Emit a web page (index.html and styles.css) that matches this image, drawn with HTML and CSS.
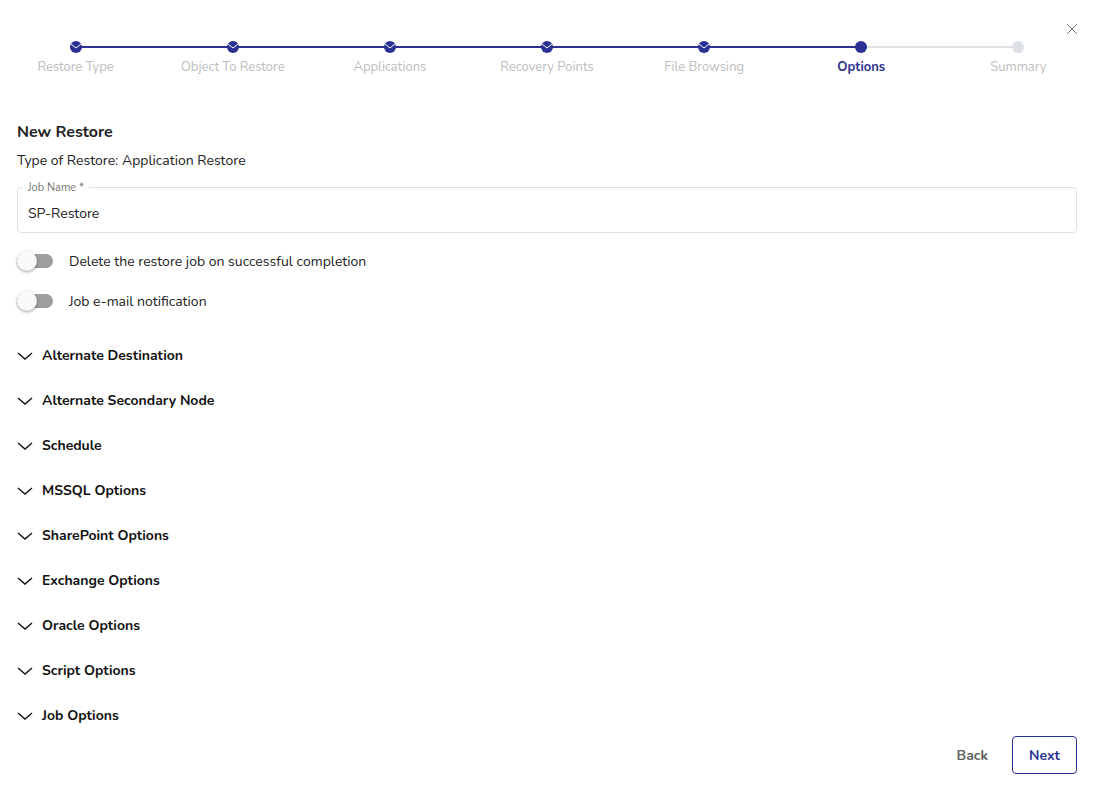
FILE: index.html
```html
<!DOCTYPE html>
<html lang="en">
<head>
    <meta charset="UTF-8">
    <meta name="viewport" content="width=device-width, initial-scale=1.0">
    <title>New Restore</title>
    <link rel="stylesheet" href="styles.css">
</head>
<body>
    <button class="close-btn" type="button" aria-label="Close">
        <svg width="12" height="12" viewBox="0 0 12 12"><path d="M1 1l10 10M11 1L1 11"/></svg>
    </button>

    <ol class="stepper">
        <li class="step done">
            <span class="dot"><svg viewBox="0 0 12 12"><path d="M1 3l5 4 5-4"/></svg></span>
            <span class="step-label">Restore Type</span>
        </li>
        <li class="step done">
            <span class="dot"><svg viewBox="0 0 12 12"><path d="M1 3l5 4 5-4"/></svg></span>
            <span class="step-label">Object To Restore</span>
        </li>
        <li class="step done">
            <span class="dot"><svg viewBox="0 0 12 12"><path d="M1 3l5 4 5-4"/></svg></span>
            <span class="step-label">Applications</span>
        </li>
        <li class="step done">
            <span class="dot"><svg viewBox="0 0 12 12"><path d="M1 3l5 4 5-4"/></svg></span>
            <span class="step-label">Recovery Points</span>
        </li>
        <li class="step done">
            <span class="dot"><svg viewBox="0 0 12 12"><path d="M1 3l5 4 5-4"/></svg></span>
            <span class="step-label">File Browsing</span>
        </li>
        <li class="step current" aria-current="step">
            <span class="dot"></span>
            <span class="step-label">Options</span>
        </li>
        <li class="step">
            <span class="dot"></span>
            <span class="step-label">Summary</span>
        </li>
    </ol>

    <form class="content">
        <h2>New Restore</h2>
        <p class="restore-type">Type of Restore: Application Restore</p>

        <fieldset class="field">
            <legend><label for="jobName">Job Name *</label></legend>
            <input type="text" id="jobName" value="SP-Restore">
        </fieldset>

        <label class="toggle">
            <input type="checkbox">
            <span>Delete the restore job on successful completion</span>
        </label>
        <label class="toggle">
            <input type="checkbox">
            <span>Job e-mail notification</span>
        </label>

        <div class="sections">
            <details>
                <summary><svg class="chevron" viewBox="0 0 16 10"><path d="M1 2l7 6 7-6"/></svg>Alternate Destination</summary>
            </details>
            <details>
                <summary><svg class="chevron" viewBox="0 0 16 10"><path d="M1 2l7 6 7-6"/></svg>Alternate Secondary Node</summary>
            </details>
            <details>
                <summary><svg class="chevron" viewBox="0 0 16 10"><path d="M1 2l7 6 7-6"/></svg>Schedule</summary>
            </details>
            <details>
                <summary><svg class="chevron" viewBox="0 0 16 10"><path d="M1 2l7 6 7-6"/></svg>MSSQL Options</summary>
            </details>
            <details>
                <summary><svg class="chevron" viewBox="0 0 16 10"><path d="M1 2l7 6 7-6"/></svg>SharePoint Options</summary>
            </details>
            <details>
                <summary><svg class="chevron" viewBox="0 0 16 10"><path d="M1 2l7 6 7-6"/></svg>Exchange Options</summary>
            </details>
            <details>
                <summary><svg class="chevron" viewBox="0 0 16 10"><path d="M1 2l7 6 7-6"/></svg>Oracle Options</summary>
            </details>
            <details>
                <summary><svg class="chevron" viewBox="0 0 16 10"><path d="M1 2l7 6 7-6"/></svg>Script Options</summary>
            </details>
            <details>
                <summary><svg class="chevron" viewBox="0 0 16 10"><path d="M1 2l7 6 7-6"/></svg>Job Options</summary>
            </details>
        </div>

        <div class="actions">
            <button class="back-btn" type="button">Back</button>
            <button class="next-btn" type="button">Next</button>
        </div>
    </form>
</body>
</html>
```
FILE: styles.css
```css
* {
    box-sizing: border-box;
}

body {
    position: relative;
    margin: 0;
    background-color: #fff;
    color: #212121;
    font-family: Nunito, Lato, sans-serif;
    font-size: 14px;
    line-height: 20px;
    overflow-x: hidden;
}

button, input {
    font: inherit;
    color: inherit;
}

svg {
    display: block;
    fill: none;
    stroke: currentColor;
}

.close-btn {
    position: absolute;
    top: 19px;
    right: 12px;
    padding: 4px;
    border: none;
    background: none;
    color: #757575;
    cursor: pointer;
}

/* Stepper */
.stepper {
    display: grid;
    grid-template-columns: repeat(7, 1fr);
    margin: 0 -3px;
    padding: 41px 0 0;
    list-style: none;
}

.step {
    position: relative;
    display: flex;
    flex-direction: column;
    align-items: center;
    gap: 4px;
    color: #bdbdbd;
}

.step::after {
    content: "";
    position: absolute;
    top: 5px;
    left: 50%;
    width: 100%;
    height: 2px;
    background-color: #dee2e6;
}

.step:last-child::after {
    display: none;
}

.step.done::after {
    background-color: #2a3192;
}

.dot {
    z-index: 1;
    width: 12px;
    height: 12px;
    border-radius: 50%;
    background-color: #dee2e6;
    color: #fff;
}

.done .dot, .current .dot {
    background-color: #2a3192;
}

.step-label {
    font-size: 13px;
}

.current .step-label {
    color: #2a3192;
    font-weight: bold;
}

/* Form */
.content {
    padding: 45px 17px 19px;
}

h2 {
    margin: 0 0 9px;
    font-size: 16px;
    line-height: 20px;
}

.restore-type {
    margin: 0 0 8px;
}

.field {
    min-width: 0;
    margin: 0;
    padding: 0 5px;
    border: 1px solid #e0e0e0;
    border-radius: 4px;
}

.field legend {
    padding: 2px 5px 0;
    color: #757575;
    font-size: 11px;
    line-height: 14px;
}

.field legend label {
    display: block;
}

.field input {
    display: block;
    width: 100%;
    height: 37px;
    padding: 0 5px;
    border: none;
    outline: none;
    background: none;
}

.toggle {
    display: flex;
    align-items: center;
    gap: 16px;
    height: 20px;
    margin-top: 20px;
}

.field + .toggle {
    margin-top: 18px;
}

.toggle span {
    padding-top: 2px;
}

.toggle input {
    display: flex;
    align-items: center;
    appearance: none;
    width: 36px;
    height: 14px;
    margin: 0;
    border-radius: 7px;
    background-color: #9e9e9e;
    cursor: pointer;
}

.toggle input::before {
    content: "";
    flex: none;
    width: 20px;
    height: 20px;
    border-radius: 50%;
    background-color: #fafafa;
    box-shadow: 0 1px 3px rgba(0, 0, 0, 0.4);
}

.toggle input:checked {
    justify-content: flex-end;
    background-color: #2a3192;
}

.sections {
    display: flex;
    flex-direction: column;
    gap: 25px;
    margin-top: 35px;
}

summary {
    display: flex;
    align-items: center;
    gap: 9px;
    color: #111;
    font-weight: bold;
    cursor: pointer;
}

.chevron {
    width: 16px;
    height: 10px;
    stroke-width: 1.4;
}

.actions {
    display: flex;
    justify-content: flex-end;
    gap: 7px;
    margin-top: 10px;
}

.actions button {
    height: 38px;
    padding: 2px 16px 0;
    border: 1px solid transparent;
    border-radius: 4px;
    background: none;
    font-weight: bold;
    cursor: pointer;
}

.actions .back-btn {
    color: #616161;
}

.actions .next-btn {
    border-color: #2a3192;
    color: #2a3192;
}
```
